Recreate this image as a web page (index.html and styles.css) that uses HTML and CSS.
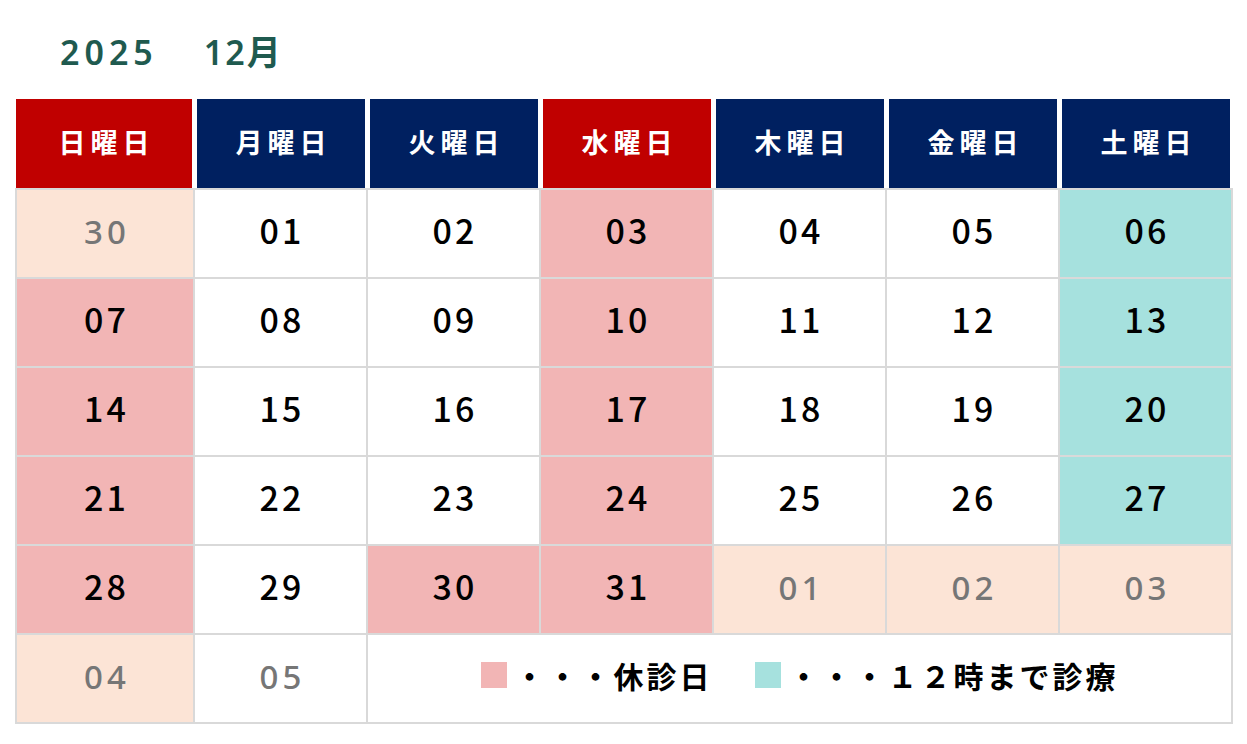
FILE: index.html
```html
<!DOCTYPE html>
<html lang="ja">
<head>
<meta charset="utf-8">
<title>2025 12月</title>
<link rel="stylesheet" href="styles.css">
</head>
<body>
<div class="page">
  <h1 class="title"><span class="year">2025</span><span class="month">12月</span></h1>
  <div class="head">
    <div class="hd red">日曜日</div>
    <div class="hd navy">月曜日</div>
    <div class="hd navy">火曜日</div>
    <div class="hd red">水曜日</div>
    <div class="hd navy">木曜日</div>
    <div class="hd navy">金曜日</div>
    <div class="hd navy">土曜日</div>
  </div>
  <div class="grid">
    <div class="c other">30</div>
    <div class="c">01</div>
    <div class="c">02</div>
    <div class="c off">03</div>
    <div class="c">04</div>
    <div class="c">05</div>
    <div class="c half">06</div>

    <div class="c off">07</div>
    <div class="c">08</div>
    <div class="c">09</div>
    <div class="c off">10</div>
    <div class="c">11</div>
    <div class="c">12</div>
    <div class="c half">13</div>

    <div class="c off">14</div>
    <div class="c">15</div>
    <div class="c">16</div>
    <div class="c off">17</div>
    <div class="c">18</div>
    <div class="c">19</div>
    <div class="c half">20</div>

    <div class="c off">21</div>
    <div class="c">22</div>
    <div class="c">23</div>
    <div class="c off">24</div>
    <div class="c">25</div>
    <div class="c">26</div>
    <div class="c half">27</div>

    <div class="c off">28</div>
    <div class="c">29</div>
    <div class="c off">30</div>
    <div class="c off">31</div>
    <div class="c other">01</div>
    <div class="c other">02</div>
    <div class="c other">03</div>

    <div class="c other">04</div>
    <div class="c next">05</div>
    <div class="c legend">
      <span class="sw sw-off"></span><span class="lt">・・・休診日</span>
      <span class="sw sw-half"></span><span class="lt">・・・１２時まで診療</span>
    </div>
  </div>
</div>
</body>
</html>
```

FILE: styles.css
```css
body {
  margin: 0;
  background: #ffffff;
  font-family: "Noto Sans CJK JP", "Noto Sans", sans-serif;
}

.page {
  padding: 30px 0 0 15px;
}

.title {
  margin: 0;
  height: 69px;
  padding-left: 45px;
  box-sizing: border-box;
  font-family: "Noto Sans", "Noto Sans CJK JP", sans-serif;
  font-weight: 600;
  font-size: 34px;
  line-height: 44px;
  letter-spacing: 5px;
  color: #1f5a4f;
  display: flex;
  gap: 46px;
}

.month {
  letter-spacing: 2px;
}

.head {
  display: grid;
  grid-template-columns: 176px repeat(6, 168px);
  column-gap: 5px;
  margin-left: 1px;
  height: 89px;
}

.hd {
  display: flex;
  align-items: center;
  justify-content: center;
  color: #ffffff;
  font-weight: 700;
  font-size: 27px;
  line-height: 1;
  letter-spacing: 5px;
  padding-left: 5px;
  padding-bottom: 4px;
}

.red { background: #c00000; }
.navy { background: #002060; }

.grid {
  display: grid;
  grid-template-columns: 178px repeat(6, 173px);
  grid-auto-rows: 89px;
  border-left: 2px solid #d9d9d9;
  border-top: 2px solid #d9d9d9;
  width: max-content;
}

.c {
  box-sizing: border-box;
  border-right: 2px solid #d9d9d9;
  border-bottom: 2px solid #d9d9d9;
  display: flex;
  align-items: center;
  justify-content: center;
  font-family: "Noto Sans CJK JP", "Noto Sans", sans-serif;
  font-weight: 500;
  font-size: 34px;
  line-height: 1;
  letter-spacing: 3px;
  padding-left: 3px;
  padding-bottom: 8px;
  color: #000000;
  background: #ffffff;
}

.off { background: #f2b5b5; }
.half { background: #a6e1de; }

.other,
.next {
  font-family: "Noto Sans", sans-serif;
  font-weight: 500;
  font-size: 33px;
  letter-spacing: 4px;
  padding-left: 4px;
  padding-bottom: 4px;
  color: #767676;
}

.other { background: #fce4d6; }

.legend {
  grid-column: span 5;
  padding-left: 0;
  padding-bottom: 8px;
  letter-spacing: 0;
}

.sw {
  display: inline-block;
  width: 26px;
  height: 26px;
  margin-right: 8px;
}

.sw-off { background: #f2b5b5; }
.sw-half { background: #a6e1de; margin-left: 42px; }

.lt {
  font-family: "Noto Sans CJK JP", sans-serif;
  font-weight: 700;
  font-size: 30px;
  line-height: 1;
  letter-spacing: 3px;
  color: #000000;
}
```
